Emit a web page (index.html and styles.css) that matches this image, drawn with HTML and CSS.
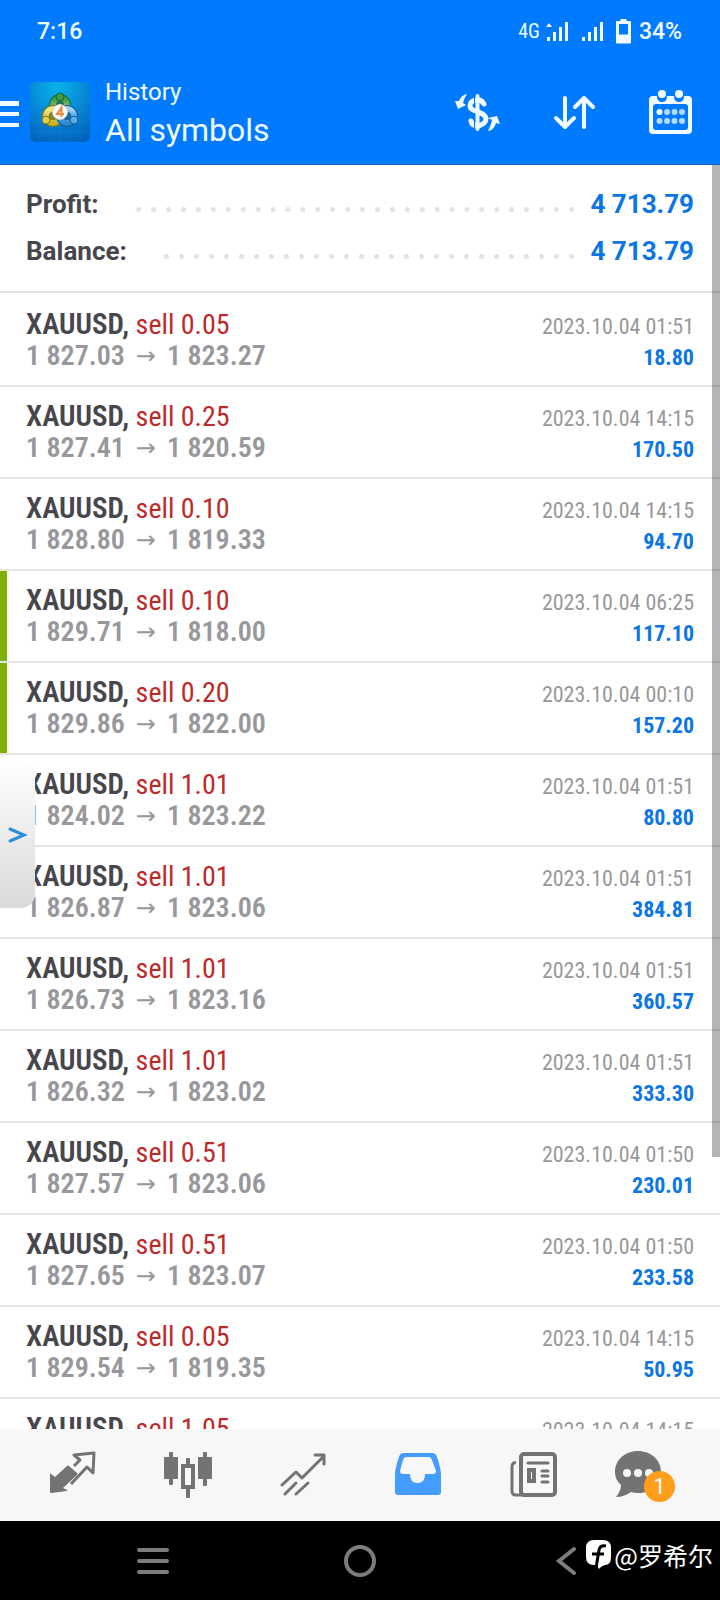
FILE: index.html
```html
<!DOCTYPE html>
<html lang="en">
<head>
<meta charset="utf-8">
<meta name="viewport" content="width=device-width, initial-scale=1">
<title>History</title>
<link rel="stylesheet" href="styles.css">
</head>
<body>
<header class="top">
  <div class="status">
    <span class="clock">7:16</span>
    <div class="status-right">
      <span class="net">4G</span>
      <svg class="signal" width="24" height="22" viewBox="0 0 24 22" aria-hidden="true"><path d="M3 3l3 4H0zM1 17h3v4H1zM7 12h3v9H7zM13 7h3v14h-3zM19 2h3v19h-3z"/></svg>
      <svg class="signal" width="24" height="22" viewBox="0 0 24 22" aria-hidden="true"><path d="M1 17h3v4H1zM7 12h3v9H7zM13 7h3v14h-3zM19 2h3v19h-3z"/></svg>
      <svg class="battery" width="15" height="25" viewBox="0 0 15 25" aria-hidden="true"><path fill-rule="evenodd" d="M4.500 0h6v2H14q1 0 1 1v20.500q0 1-1 1H1q-1 0-1-1V3q0-1 1-1h3.500zM3 5v10.500h9V5z"/></svg>
      <span class="level">34%</span>
    </div>
  </div>
  <div class="appbar">
    <button class="icon-btn menu" aria-label="Menu"><svg width="19" height="28" viewBox="0 0 19 28"><path d="M0 1h19v5H0zM0 12h19v4H0zM0 23h19v4H0z"/></svg></button>
    <svg class="logo" width="60" height="60" viewBox="0 0 60 60" role="img" aria-label="MetaTrader 4">
      <defs>
        <radialGradient id="bg" cx=".45" cy=".1" r=".95"><stop offset="0" stop-color="#08b4ea"/><stop offset=".5" stop-color="#0787d6"/><stop offset="1" stop-color="#0362bd"/></radialGradient>
        <linearGradient id="gr" x2="0" y2="1"><stop offset="0" stop-color="#3c9a40"/><stop offset="1" stop-color="#a5d394"/></linearGradient>
        <linearGradient id="ye" x2="0" y2="1"><stop offset="0" stop-color="#f2e873"/><stop offset="1" stop-color="#c9b52c"/></linearGradient>
        <linearGradient id="bl" x2="0" y2="1"><stop offset="0" stop-color="#9ad4f5"/><stop offset="1" stop-color="#2a86cf"/></linearGradient>
      </defs>
      <rect width="60" height="60" rx="5" fill="url(#bg)"/>
      <path d="M0 20h60M0 30h60M0 40h60M0 50h60M10 0v60M20 0v60M30 0v60M40 0v60M50 0v60" stroke="#39b4f0" stroke-opacity=".15" fill="none"/>
      <circle cx="30" cy="23" r="7" fill="#1d7a58" stroke="#176b49" stroke-width="8"/>
      <circle cx="30" cy="23" r="7" fill="none" stroke="url(#gr)" stroke-width="6"/>
      <circle cx="23" cy="34" r="7" fill="#8d8726" stroke="#777222" stroke-width="8"/>
      <circle cx="23" cy="34" r="7" fill="none" stroke="url(#ye)" stroke-width="6"/>
      <circle cx="37" cy="34" r="7" fill="#1c6cae" stroke="#155b98" stroke-width="8"/>
      <circle cx="37" cy="34" r="7" fill="none" stroke="url(#bl)" stroke-width="6"/>
      <circle cx="30" cy="15" r="4" fill="#3d9b43" stroke="#186337"/>
      <circle cx="16" cy="38" r="4" fill="#dfcf4a" stroke="#7b7420"/>
      <circle cx="44" cy="38" r="4" fill="#5aafe6" stroke="#14599a"/>
      <circle cx="30" cy="30" r="7.500" fill="#fff" stroke="#cbd3d5"/>
      <path d="M31.500 35v-9.500L27 32h7" fill="none" stroke="#f08b3c" stroke-width="2"/>
    </svg>
    <div class="titles">
      <p class="over">History</p>
      <h1>All symbols</h1>
    </div>
    <div class="actions">
      <button class="icon-btn" aria-label="Currency">
        <svg width="48" height="48" viewBox="0 0 48 48"><g fill="none" stroke-width="5" stroke-linecap="round"><path stroke-width="4" d="M24.500 8v33"/><path d="M31 16q-2-4-6-4-8 0-8 6 0 3.500 8 6t8 7-8 7q-6 0-7-5"/></g><path stroke="none" d="M14 6Q8 7 6 13l-4 0 3 8 8-4-3-2q1-5 4-9zM35 43q6-1 8-8l4 1-3-8-9 2 4 2q-1 5-4 11z"/><path d="M21.500 7v10M21.500 25v17" stroke="#007aff" stroke-width="1" fill="none"/></svg>
      </button>
      <button class="icon-btn" aria-label="Sort">
        <svg width="48" height="48" viewBox="0 0 48 48"><path fill="none" stroke-width="4" stroke-linecap="round" stroke-linejoin="round" d="M15 10v29M6 30l9 9 9-9M34 39V10M25 19l9-9 9 9"/></svg>
      </button>
      <button class="icon-btn" aria-label="Period">
        <svg width="48" height="48" viewBox="0 0 48 48"><path stroke="none" fill-rule="evenodd" d="M6 8h4q0 6 5 6t5-6h7q0 6 5 6t5-6h4q4 0 4 4v30q0 4-4 4H6q-4 0-4-4V12q0-4 4-4zM9 16q-3 0-3 3v20q0 3 3 3h29q3 0 3-3V19q0-3-3-3z"/><g stroke="none"><circle cx="15" cy="6" r="4"/><circle cx="32" cy="6" r="4"/><circle cx="12.500" cy="24" r="3"/><g opacity=".75"><circle cx="20" cy="24" r="3"/><circle cx="27.500" cy="24" r="3"/><circle cx="35" cy="24" r="3"/><circle cx="12.500" cy="33" r="3"/><circle cx="20" cy="33" r="3"/><circle cx="27.500" cy="33" r="3"/><circle cx="35" cy="33" r="3"/></g></g></svg>
      </button>
    </div>
  </div>
</header>

<main class="content">
  <dl class="summary">
    <div class="sum-row"><dt>Profit:</dt><dd>4 713.79</dd></div>
    <div class="sum-row"><dt>Balance:</dt><dd>4 713.79</dd></div>
  </dl>
  <ul class="deals">
    <li class="deal"><div class="line"><span><b>XAUUSD,</b> <span class="side">sell 0.05</span></span><time>2023.10.04 01:51</time></div><div class="line"><span class="prices"><span class="open">1 827.03</span><span class="arrow">→</span><span>1 823.27</span></span><span class="gain">18.80</span></div></li>
    <li class="deal"><div class="line"><span><b>XAUUSD,</b> <span class="side">sell 0.25</span></span><time>2023.10.04 14:15</time></div><div class="line"><span class="prices"><span class="open">1 827.41</span><span class="arrow">→</span><span>1 820.59</span></span><span class="gain">170.50</span></div></li>
    <li class="deal"><div class="line"><span><b>XAUUSD,</b> <span class="side">sell 0.10</span></span><time>2023.10.04 14:15</time></div><div class="line"><span class="prices"><span class="open">1 828.80</span><span class="arrow">→</span><span>1 819.33</span></span><span class="gain">94.70</span></div></li>
    <li class="deal marked"><div class="line"><span><b>XAUUSD,</b> <span class="side">sell 0.10</span></span><time>2023.10.04 06:25</time></div><div class="line"><span class="prices"><span class="open">1 829.71</span><span class="arrow">→</span><span>1 818.00</span></span><span class="gain">117.10</span></div></li>
    <li class="deal marked"><div class="line"><span><b>XAUUSD,</b> <span class="side">sell 0.20</span></span><time>2023.10.04 00:10</time></div><div class="line"><span class="prices"><span class="open">1 829.86</span><span class="arrow">→</span><span>1 822.00</span></span><span class="gain">157.20</span></div></li>
    <li class="deal"><div class="line"><span><b>XAUUSD,</b> <span class="side">sell 1.01</span></span><time>2023.10.04 01:51</time></div><div class="line"><span class="prices"><span class="open">1 824.02</span><span class="arrow">→</span><span>1 823.22</span></span><span class="gain">80.80</span></div></li>
    <li class="deal"><div class="line"><span><b>XAUUSD,</b> <span class="side">sell 1.01</span></span><time>2023.10.04 01:51</time></div><div class="line"><span class="prices"><span class="open">1 826.87</span><span class="arrow">→</span><span>1 823.06</span></span><span class="gain">384.81</span></div></li>
    <li class="deal"><div class="line"><span><b>XAUUSD,</b> <span class="side">sell 1.01</span></span><time>2023.10.04 01:51</time></div><div class="line"><span class="prices"><span class="open">1 826.73</span><span class="arrow">→</span><span>1 823.16</span></span><span class="gain">360.57</span></div></li>
    <li class="deal"><div class="line"><span><b>XAUUSD,</b> <span class="side">sell 1.01</span></span><time>2023.10.04 01:51</time></div><div class="line"><span class="prices"><span class="open">1 826.32</span><span class="arrow">→</span><span>1 823.02</span></span><span class="gain">333.30</span></div></li>
    <li class="deal"><div class="line"><span><b>XAUUSD,</b> <span class="side">sell 0.51</span></span><time>2023.10.04 01:50</time></div><div class="line"><span class="prices"><span class="open">1 827.57</span><span class="arrow">→</span><span>1 823.06</span></span><span class="gain">230.01</span></div></li>
    <li class="deal"><div class="line"><span><b>XAUUSD,</b> <span class="side">sell 0.51</span></span><time>2023.10.04 01:50</time></div><div class="line"><span class="prices"><span class="open">1 827.65</span><span class="arrow">→</span><span>1 823.07</span></span><span class="gain">233.58</span></div></li>
    <li class="deal"><div class="line"><span><b>XAUUSD,</b> <span class="side">sell 0.05</span></span><time>2023.10.04 14:15</time></div><div class="line"><span class="prices"><span class="open">1 829.54</span><span class="arrow">→</span><span>1 819.35</span></span><span class="gain">50.95</span></div></li>
    <li class="deal"><div class="line"><span><b>XAUUSD,</b> <span class="side">sell 1.05</span></span><time>2023.10.04 14:15</time></div></li>
  </ul>
  <div class="scrollbar"></div>
  <button class="handle" aria-label="Open panel"><svg width="20" height="16" viewBox="0 0 20 16"><path d="M2 2l14 6-14 6" fill="none" stroke="#2a8fd8" stroke-width="3" stroke-linecap="round"/></svg></button>
</main>

<nav class="tabs">
  <a href="#quotes" aria-label="Quotes"><svg width="48" height="48" viewBox="0 0 48 48"><path fill="currentColor" d="M1 23q0-1 1 0l4 3 12-11q1-1 2 0l8 7q1 1 0 2L14 37l4 2q1 1 0 1L2 42q-1 0-1-1z"/><path fill="none" stroke="currentColor" stroke-width="3" stroke-linejoin="round" d="M25 15l6-6-6-5 20-2-1 20-6-6-16 17"/></svg></a>
  <a href="#charts" aria-label="Charts"><svg width="48" height="48" viewBox="0 0 48 48"><g fill="currentColor"><rect x="0" y="6" width="14" height="22" rx="1"/><rect x="5" y="1" width="4" height="33" rx="1"/><rect x="34" y="6" width="14" height="22" rx="1"/><rect x="39" y="1" width="4" height="34" rx="1"/><rect x="22" y="7" width="4" height="8" rx="1"/><rect x="22" y="36" width="4" height="11" rx="1"/></g><rect x="19" y="15" width="10" height="21" fill="none" stroke="currentColor" stroke-width="4"/></svg></a>
  <a href="#trade" aria-label="Trade"><svg width="48" height="48" viewBox="0 0 48 48"><path fill="none" stroke="currentColor" stroke-width="3" stroke-linejoin="round" stroke-linecap="round" d="M3 34l14-13 6 6L45 5M36 4h9v9M6 43l11-11M17 43l12-11"/></svg></a>
  <a href="#history" class="current" aria-label="History" aria-current="page"><svg width="48" height="48" viewBox="0 0 48 48"><path fill="currentColor" fill-rule="evenodd" d="M10 2h28q4 0 5 4 4 12 4 18v17q0 3-3 3H4q-3 0-3-3V24q0-7 4-18 1-4 5-4zM12 6q-2 0-3 3L6 20q0 3 3 3h7q0 9 7.500 9T31 23h8q3 0 3-3L38 9q-1-3-3-3z"/></svg></a>
  <a href="#news" aria-label="News"><svg width="48" height="48" viewBox="0 0 48 48"><g fill="none" stroke="currentColor" stroke-width="4"><rect x="12" y="3" width="34" height="41" rx="3"/><path stroke-width="3" d="M7 12q-4-1-4 4v24q0 4 4 4h8"/><rect x="20" y="19" width="5" height="11"/><path stroke-width="3" stroke-linecap="round" d="M19 12h20M33 20h6M33 25h6M33 31h6"/></g></svg></a>
  <a href="#chat" class="chat" aria-label="Messages, 1 new"><svg width="48" height="48" viewBox="0 0 48 48"><path fill="currentColor" d="M23 0C36 0 46 9 46 21S37 42 24 42q-5 0-8-1-7 5-15 5 5-6 5-12-6-5-6-13C0 9 10 0 23 0z"/><g fill="#f7f7f7"><circle cx="12" cy="22" r="4"/><circle cx="23" cy="22" r="4"/><circle cx="34" cy="22" r="4"/></g></svg><span class="badge">1</span></a>
</nav>

<footer class="sysnav">
  <button aria-label="Recent apps"><svg width="34" height="34" viewBox="0 0 34 34"><path d="M3 6h28M3 17h28M3 28h28"/></svg></button>
  <button aria-label="Home"><svg width="34" height="34" viewBox="0 0 34 34"><circle cx="17" cy="17" r="14"/></svg></button>
  <button aria-label="Back"><svg width="34" height="34" viewBox="0 0 34 34"><path d="M24 5L9 17l15 12"/></svg></button>
  <div class="credit"><svg width="26" height="30" viewBox="0 0 26 30" aria-hidden="true"><path fill="#fff" d="M8 0h9q8 0 8 8v9q0 8-6 8-4 1-6 4l-2-4H8q-8 0-8-8V8q0-8 8-8z"/><path fill="none" stroke="#000" stroke-width="3" d="M20 6q-6-1-7 4L10 28M6 14h12"/></svg><span>@罗希尔</span></div>
</footer>
</body>
</html>
```
FILE: styles.css
```css
* { box-sizing: border-box; margin: 0; padding: 0; }
body {
  display: flex; flex-direction: column; height: 100vh; overflow: hidden;
  background: #fff; font-family: Roboto, "Noto Sans", sans-serif; color: #47464d;
}
button { background: none; border: 0; font: inherit; color: inherit; }
svg { display: block; flex: none; }

.top { background: #007aff; color: #f0fbff; border-bottom: 1px solid #1b66bd; }
.top svg { fill: currentColor; }
.status { display: flex; justify-content: space-between; align-items: center; height: 60px; padding: 2px 38px 0 37px; font-size: 23px; font-weight: 500; }
.status-right { display: flex; align-items: center; }
.net { font: 20px "Roboto Condensed", Roboto, sans-serif; margin-right: 6px; }
.signal { margin-right: 11px; }
.battery { margin-right: 8px; }
.appbar { display: flex; align-items: center; height: 104px; padding-right: 25px; }
.menu { padding-top: 3px; }
.logo { margin-left: 11px; }
.titles { flex: 1; padding: 2px 0 0 15px; }
.over { font-size: 24px; line-height: 28px; margin-bottom: 5px; }
h1 { font-size: 32px; line-height: 38px; font-weight: 400; }
.actions { display: flex; gap: 49px; }
.actions svg { stroke: currentColor; }

.content { flex: 1; min-height: 0; position: relative; overflow: hidden; }
.summary { padding: 15px 26px 17px; border-bottom: 2px solid #e4e4e4; }
.sum-row { display: flex; align-items: center; height: 47px; font-size: 26px; font-weight: 700; }
.sum-row dd { color: #0c76e2; }
.sum-row::before {
  content: ""; order: 1; flex: 1; height: 5px; margin: 12px 11px 0 32px;
  background: radial-gradient(circle, #e2e2e2 2px, transparent 3px) right center / 15px 5px round;
}
.sum-row dd { order: 2; }

.deals { list-style: none; padding-top: 2px; font-family: "Roboto Condensed", Roboto, sans-serif; }
.deal { padding: 13px 26px; border-bottom: 2px solid #e4e4e4; font-size: 28px; }
.marked { box-shadow: inset 7px 0 #7db000; }
.line { display: flex; justify-content: space-between; align-items: baseline; height: 32px; line-height: 32px; }
.deal b { font-size: 29px; font-weight: 600; }
.side { color: #bd2a29; }
.prices { display: flex; font-weight: 600; color: #98989c; }
.open { min-width: 98px; }
.arrow { width: 42px; text-align: center; font-family: "DejaVu Sans", sans-serif; font-weight: 400; font-size: 24px; }
.deal time { font-size: 22px; color: #98989c; }
.gain { font-size: 22px; font-weight: 700; color: #0c76e2; }

.scrollbar { position: absolute; top: 0; right: 0; width: 8px; height: 78.500%; background: rgba(0, 0, 0, .29); }
.handle {
  position: absolute; left: 0; top: 592px; width: 35px; height: 151px; padding: 4px 0 0 8px;
  border-radius: 0 20px 14px 0; background: linear-gradient(#fff, #f0f0f0 40%, #dadada);
}

.tabs { display: flex; height: 92px; padding: 0 15px; background: #f7f7f7; }
.tabs a { flex: 1; display: flex; justify-content: center; align-items: center; color: #737373; }
.tabs .current { color: #459cff; }
.tabs .chat { position: relative; }
.chat svg { margin-right: 18px; }
.badge {
  position: absolute; left: 54px; top: 42px; width: 31px; height: 31px; border-radius: 50%;
  background: #ff9d1c; color: #fff; font-size: 22px; line-height: 31px; text-align: center;
}

.sysnav { position: relative; display: flex; height: 79px; padding: 0 50px; background: #000; }
.sysnav button { flex: 1; display: flex; justify-content: center; align-items: center; }
.sysnav button svg { fill: none; stroke: #7d7d7d; stroke-width: 4; stroke-linecap: round; }
.credit {
  position: absolute; right: 7px; top: 16px; display: flex; align-items: center; gap: 2px;
  color: #fff; font: 25px/36px "Noto Sans CJK SC", sans-serif;
}
```
